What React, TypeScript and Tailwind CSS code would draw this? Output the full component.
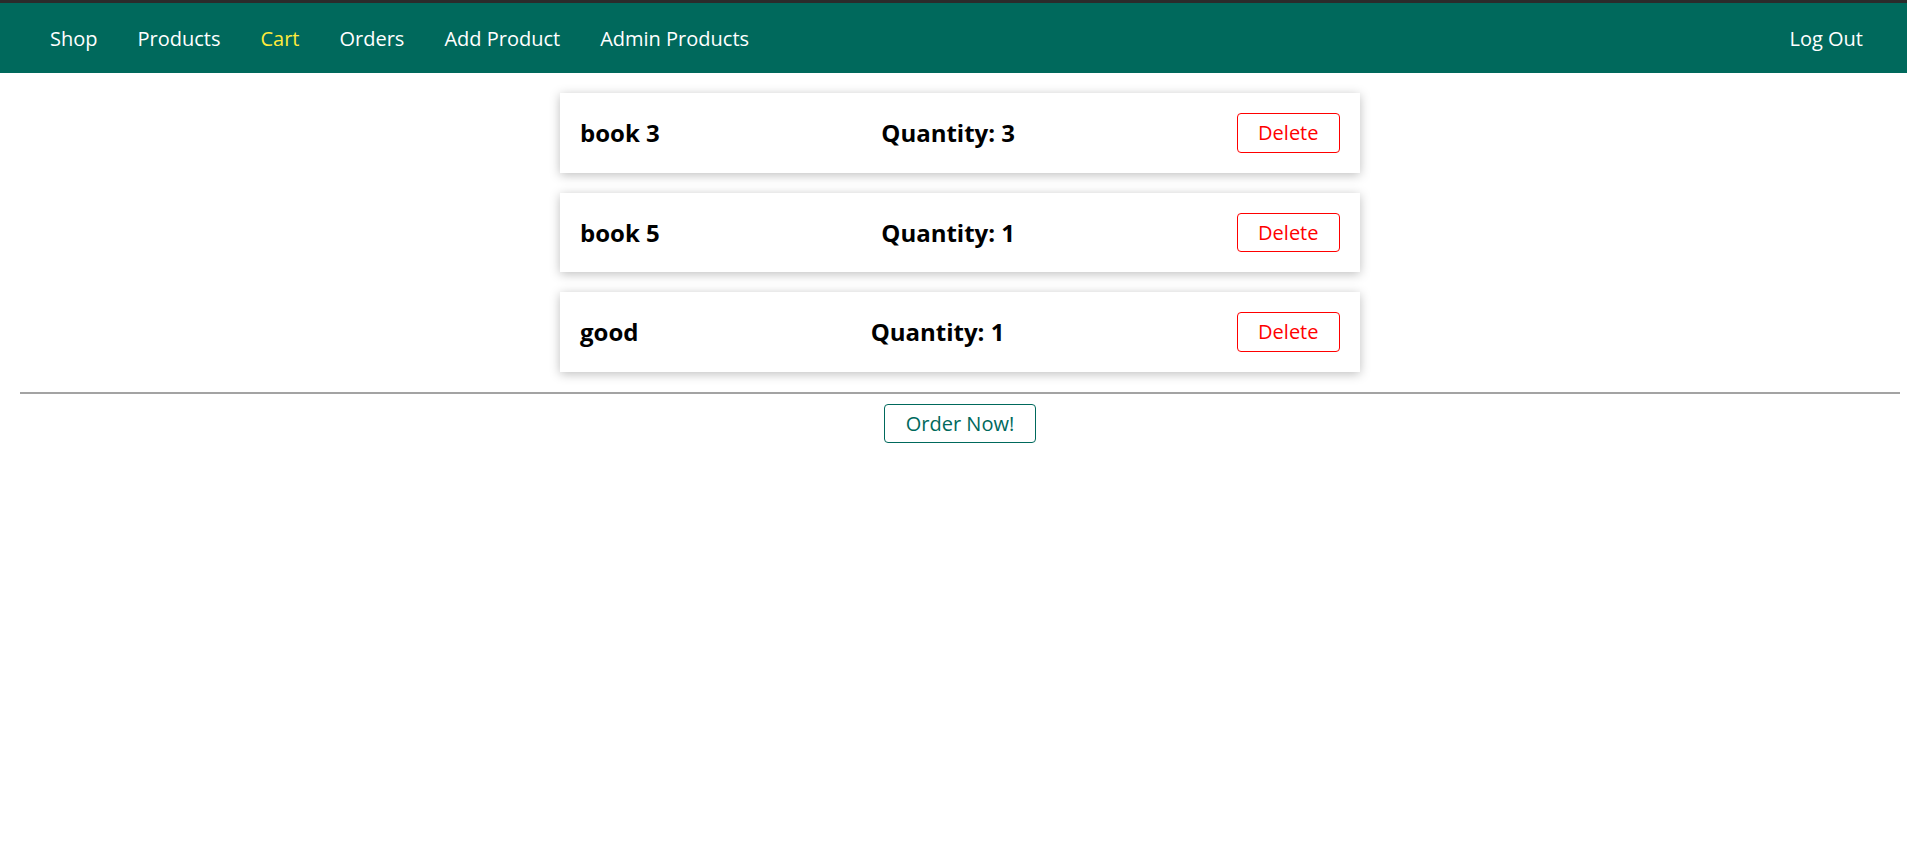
import React from "react";

const items = [
  { title: "book 3", qty: 3 },
  { title: "book 5", qty: 1 },
  { title: "good", qty: 1 },
];

export default function App() {
  return (
    <div className="min-h-[841px] bg-white font-['Open_Sans',sans-serif] text-[20px] leading-[normal] text-black">
      <div className="h-[3px] bg-[#2b2b2b]" />
      <header className="flex h-[70px] items-center bg-[#00695c] pl-[30px] pr-[24px]">
        <nav className="flex h-full w-full items-center justify-between">
          <ul className="flex">
            <li className="mx-5"><a className="text-white">Shop</a></li>
            <li className="mx-5"><a className="text-white">Products</a></li>
            <li className="mx-5"><a className="text-[#ffeb3b]">Cart</a></li>
            <li className="mx-5"><a className="text-white">Orders</a></li>
            <li className="mx-5"><a className="text-white">Add Product</a></li>
            <li className="mx-5"><a className="text-white">Admin Products</a></li>
          </ul>
          <ul className="flex">
            <li className="mx-5"><button className="text-white">Log Out</button></li>
          </ul>
        </nav>
      </header>
      <main className="pl-5 pr-[7px] pt-5">
        <ul className="mx-auto flex w-[800px] max-w-[90%] flex-col gap-5">
          {items.map((it) => (
            <li
              key={it.title}
              className="flex items-center justify-between p-5 shadow-[0_2px_10px_rgba(0,0,0,0.26)]"
            >
              <h1 className="m-0 text-[24px] font-bold leading-[normal]">{it.title}</h1>
              <h2 className="m-0 text-[24px] font-bold leading-[normal]">Quantity: {it.qty}</h2>
              <form>
                <button
                  type="button"
                  className="rounded-[4px] border border-[#ff0000] bg-white px-[20.5px] py-[5.25px] text-[20px] leading-[normal] text-[#ff0000]"
                >
                  Delete
                </button>
              </form>
            </li>
          ))}
        </ul>
        <hr className="mt-5 h-0 border-0 border-t-2 border-[#a3a3a3]" />
        <div className="mt-[10px] text-center">
          <button
            type="button"
            className="rounded-[4px] border border-[#00695c] bg-white px-[20.5px] py-[5.25px] text-[20px] leading-[normal] text-[#00695c]"
          >
            Order Now!
          </button>
        </div>
      </main>
    </div>
  );
}
